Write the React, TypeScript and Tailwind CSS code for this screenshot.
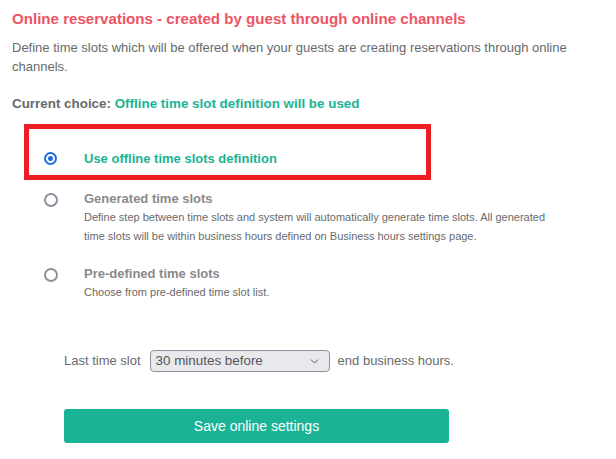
import { ChevronDown } from "lucide-react";

type Option = {
  title: string;
  desc?: string;
  checked?: boolean;
};

const Radio = ({ checked }: { checked?: boolean }) =>
  checked ? (
    <span className="flex h-[13px] w-[13px] shrink-0 items-center justify-center rounded-full border-2 border-[#1a6ce0] bg-white">
      <span className="h-[5px] w-[5px] rounded-full bg-[#1a6ce0]" />
    </span>
  ) : (
    <span className="h-[14px] w-[14px] shrink-0 rounded-full border-2 border-[#8f8f9d] bg-white" />
  );

const options: Option[] = [
  {
    title: "Generated time slots",
    desc: "Define step between time slots and system will automatically generate time slots. All generated time slots will be within business hours defined on Business hours settings page.",
  },
  {
    title: "Pre-defined time slots",
    desc: "Choose from pre-defined time slot list.",
  },
];

export default function App() {
  return (
    <div className="min-h-screen bg-white px-3 font-['Liberation_Sans',Arial,sans-serif] text-[#676a6c]">
      <h2 className="pt-[7px] text-[15.1px] leading-6 font-bold text-[#ed5565]">
        Online reservations - created by guest through online channels
      </h2>
      <p className="mt-[7px] max-w-[570px] text-[13px] leading-[19px]">
        Define time slots which will be offered when your guests are creating reservations through online channels.
      </p>
      <p className="mt-[18px] text-[13.4px] leading-[19px] font-bold">
        Current choice: <span className="text-[#1ab394]">Offline time slot definition will be used</span>
      </p>

      {/* selected option, framed */}
      <div className="mt-[11px] ml-3 flex h-[56px] w-[407px] items-end border-[5px] border-[#ee1c25] pb-[7px]">
        <div className="flex items-center">
          <div className="ml-[15px] flex w-[40px] items-center">
            <Radio checked />
          </div>
          <span className="text-[13px] leading-[19px] font-bold text-[#1ab394]">Use offline time slots definition</span>
        </div>
      </div>

      {options.map((opt, i) => (
        <div key={opt.title} className={`flex ${i === 0 ? "mt-[9px]" : "mt-[18px]"}`}>
          <div className="ml-8 flex h-[19px] w-[40px] items-center pt-[2px]">
            <Radio />
          </div>
          <div className="max-w-[480px]">
            <div className="text-[13px] leading-[19px] font-bold text-[#8a8a8a]">{opt.title}</div>
            <div className="text-[11px] leading-[19px] text-[#676a6c]">{opt.desc}</div>
          </div>
        </div>
      ))}

      <div className="mt-[48px] ml-[52px] flex items-center text-[13px]">
        <span>Last time slot</span>
        <div className="relative ml-[9px] flex h-[22px] w-[180px] items-center rounded-[4px] border border-[#8f8f9d] bg-[#e9e9ed] pl-[5px] text-[13.4px] text-[#555]">
          <span>30 minutes before</span>
          <ChevronDown className="absolute right-[8px] h-[13px] w-[13px] text-[#555]" strokeWidth={1.75} />
        </div>
        <span className="ml-[8px]">end business hours.</span>
      </div>

      <button className="mt-[37px] ml-[52px] flex h-[34px] w-[385px] items-center justify-center rounded-[3px] bg-[#1ab394] text-[14px] text-white">
        Save online settings
      </button>
    </div>
  );
}
